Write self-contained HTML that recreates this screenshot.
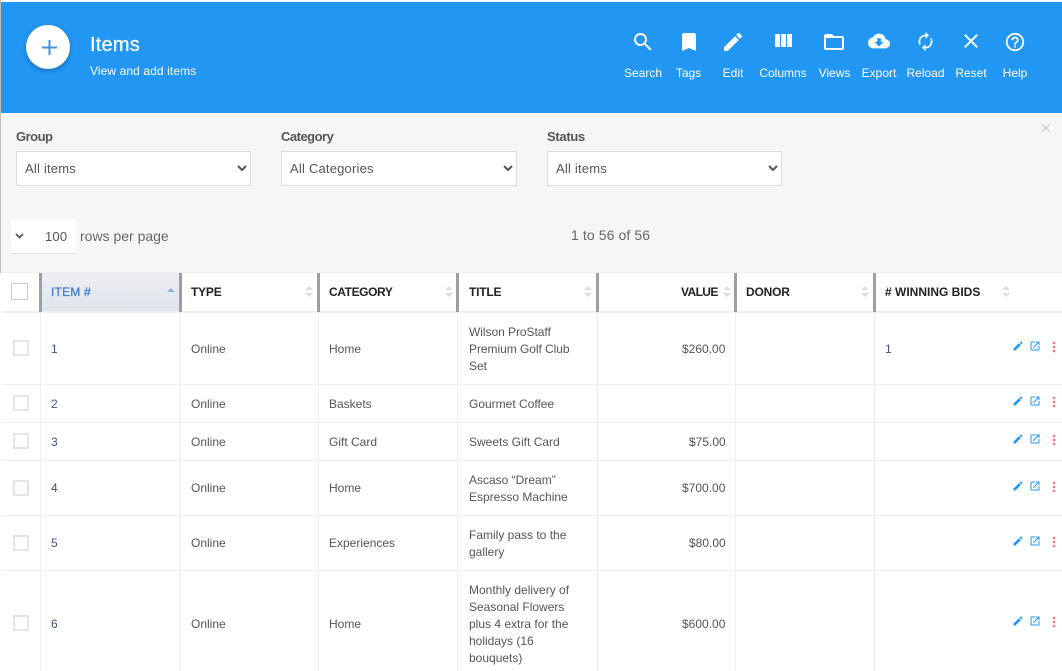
<!DOCTYPE html>
<html lang="en"><head><meta charset="utf-8"><title>Items</title>
<style>
html,body{margin:0;padding:0;background:#fff}
body{width:1062px;height:671px;overflow:hidden;position:relative;font-family:"Liberation Sans",sans-serif;color:#555}
.a,.t,svg.i,.h,.v,.r,.cb,.s{position:absolute}
.t{white-space:nowrap;line-height:16px}
.tb{font-size:12px;color:#fff;width:70px;text-align:center;top:65px}
svg.i{width:24px;height:24px;top:30px;fill:#fff}
.lab{font-size:13px;font-weight:bold;color:#555;top:129px;letter-spacing:-.5px}
select{position:absolute;top:151px;height:35px;background:#fff;border:1px solid #ddd;border-radius:0;font:13px "Liberation Sans",sans-serif;color:#555;padding:0 4px;outline:0;letter-spacing:.2px}
.v{top:273px;width:3px;height:39px;background:#9e9e9e}
.h{top:284px;font-size:12px;font-weight:bold;color:#222;line-height:16px;white-space:nowrap}
.s{top:286px;width:8px;height:11px}
.s:before,.s:after{content:"";position:absolute;left:0;border-left:4px solid transparent;border-right:4px solid transparent}
.s:before{top:0;border-bottom:4px solid #ddd}
.s:after{bottom:0;border-top:4px solid #ddd}
.l{position:absolute;top:313px;width:1px;height:358px;background:#eee}
.r{left:1px;width:1061px;height:1px;background:#eee}
.cb{left:13px;width:12px;height:12px;border:2px solid #e5e5e5;background:#fff}
.c{position:absolute;font-size:12px;line-height:17px;color:#555;white-space:nowrap}
.n{color:#45527f}
.ic{position:absolute;width:12px;height:12px}
.dt{position:absolute;width:16px;height:16px;left:1046px;fill:#f77}
</style></head><body>
<svg width="0" height="0" style="position:absolute"><defs>
<symbol id="pen" viewBox="0 0 24 24"><path d="M3 17.25V21h3.75L17.81 9.94l-3.75-3.75L3 17.25zM20.71 7.04c.39-.39.39-1.02 0-1.41l-2.34-2.34c-.39-.39-1.02-.39-1.41 0l-1.83 1.83 3.75 3.75 1.83-1.83z"/></symbol>
<symbol id="open" viewBox="0 0 24 24"><path d="M19 19H5V5h7V3H5c-1.11 0-2 .9-2 2v14c0 1.1.89 2 2 2h14c1.1 0 2-.9 2-2v-7h-2v7zM14 3v2h3.59l-9.83 9.83 1.41 1.41L19 6.41V10h2V3h-7z"/></symbol>
<symbol id="dots" viewBox="0 0 24 24"><path d="M12 8c1.1 0 2-.9 2-2s-.9-2-2-2-2 .9-2 2 .9 2 2 2zm0 2c-1.1 0-2 .9-2 2s.9 2 2 2 2-.9 2-2-.9-2-2-2zm0 6c-1.1 0-2 .9-2 2s.9 2 2 2 2-.9 2-2-.9-2-2-2z"/></symbol>
</defs></svg>

<div class="a" style="left:0;top:0;width:1px;height:273px;background:#bdbdbd"></div>
<div class="a" style="left:1px;top:2px;width:1061px;height:111px;background:#2196f3"></div>
<div class="a" style="left:1px;top:113px;width:1061px;height:159px;background:#f6f6f6"></div>

<div class="a" style="left:26px;top:25px;width:44px;height:44px;border-radius:50%;background:#fff;box-shadow:0 2px 5px rgba(0,0,0,.25)"></div>
<svg class="a" style="left:42px;top:40px" width="15" height="15" viewBox="0 0 15 15"><path d="M7.5 0v15M0 7.5h15" stroke="#4a90e2" stroke-width="2" fill="none"/></svg>
<div class="t" style="left:90px;top:34px;font-size:20px;line-height:23px;color:#fff;-webkit-text-stroke:.25px #fff;letter-spacing:.2px">Items</div>
<div class="t" style="left:90px;top:63px;font-size:12px;color:#fff;letter-spacing:.1px">View and add items</div>

<svg class="i" style="left:631px" viewBox="0 0 24 24"><path d="M15.5 14h-.79l-.28-.27C15.41 12.59 16 11.11 16 9.5 16 5.91 13.09 3 9.5 3S3 5.91 3 9.5 5.91 16 9.5 16c1.61 0 3.09-.59 4.23-1.57l.27.28v.79l5 4.99L20.49 19l-4.99-5zm-6 0C7.01 14 5 11.99 5 9.5S7.01 5 9.5 5 14 7.01 14 9.5 11.99 14 9.5 14z"/></svg>
<svg class="i" style="left:676.5px" viewBox="0 0 24 24"><path d="M17 3H7c-1.1 0-1.99.9-1.99 2L5 21l7-3 7 3V5c0-1.1-.9-2-2-2z"/></svg>
<svg class="i" style="left:721px" viewBox="0 0 24 24"><path d="M3 17.25V21h3.75L17.81 9.94l-3.75-3.75L3 17.25zM20.71 7.04c.39-.39.39-1.02 0-1.41l-2.34-2.34c-.39-.39-1.02-.39-1.41 0l-1.83 1.83 3.75 3.75 1.83-1.83z"/></svg>
<svg class="i" style="left:771px;top:29px" viewBox="0 0 24 24"><path d="M10 18h5V5h-5v13zm-6 0h5V5H4v13zM16 5v13h5V5h-5z"/></svg>
<svg class="i" style="left:822px" viewBox="0 0 24 24"><path d="M20 6h-8l-2-2H4c-1.1 0-1.99.9-1.99 2L2 18c0 1.1.9 2 2 2h16c1.1 0 2-.9 2-2V8c0-1.1-.9-2-2-2zm0 12H4V8h16v10z"/></svg>
<svg class="i" style="left:868px;width:22px;height:22px;top:30px" viewBox="0 0 24 24"><path d="M19.35 10.04C18.67 6.59 15.64 4 12 4 9.11 4 6.6 5.64 5.35 8.04 2.34 8.36 0 10.91 0 14c0 3.31 2.69 6 6 6h13c2.76 0 5-2.24 5-5 0-2.64-2.05-4.78-4.65-4.96zM17 13l-5 5-5-5h3V9h4v4h3z"/></svg>
<svg class="i" style="left:915px;width:21px;height:21px;top:31px" viewBox="0 0 24 24"><path d="M12 6v3l4-4-4-4v3c-4.42 0-8 3.58-8 8 0 1.57.46 3.03 1.24 4.26L6.7 14.8c-.45-.83-.7-1.79-.7-2.8 0-3.31 2.69-6 6-6zm6.76 1.74L17.3 9.2c.44.84.7 1.79.7 2.8 0 3.31-2.69 6-6 6v-3l-4 4 4 4v-3c4.42 0 8-3.58 8-8 0-1.57-.46-3.03-1.24-4.26z"/></svg>
<svg class="i" style="left:959px;top:29px" viewBox="0 0 24 24"><path d="M19 6.41L17.59 5 12 10.59 6.41 5 5 6.41 10.59 12 5 17.59 6.41 19 12 13.41 17.59 19 19 17.59 13.41 12z"/></svg>
<svg class="i" style="left:1004px;width:22px;height:22px;top:31px" viewBox="0 0 24 24"><path d="M11 18h2v-2h-2v2zm1-16C6.48 2 2 6.48 2 12s4.48 10 10 10 10-4.48 10-10S17.52 2 12 2zm0 18c-4.41 0-8-3.59-8-8s3.59-8 8-8 8 3.59 8 8-3.59 8-8 8zm0-14c-2.21 0-4 1.79-4 4h2c0-1.1.9-2 2-2s2 .9 2 2c0 2-3 1.75-3 5h2c0-2.25 3-2.5 3-5 0-2.21-1.79-4-4-4z"/></svg>

<div class="t tb" style="left:608px">Search</div>
<div class="t tb" style="left:653.5px">Tags</div>
<div class="t tb" style="left:698px">Edit</div>
<div class="t tb" style="left:748px">Columns</div>
<div class="t tb" style="left:799.5px">Views</div>
<div class="t tb" style="left:844px">Export</div>
<div class="t tb" style="left:890.5px">Reload</div>
<div class="t tb" style="left:936px">Reset</div>
<div class="t tb" style="left:980px">Help</div>

<div class="t lab" style="left:16px">Group</div>
<div class="t lab" style="left:281px">Category</div>
<div class="t lab" style="left:547px;letter-spacing:-.3px">Status</div>
<select style="left:16px;width:235px"><option>All items</option></select>
<select style="left:281px;width:236px"><option>All Categories</option></select>
<select style="left:547px;width:235px"><option>All items</option></select>
<svg class="a" style="left:1042px;top:124px" width="8" height="8" viewBox="0 0 8 8"><path d="M.3.3l7.4 7.4M7.7.3L.3 7.7" stroke="#c8c8c8" stroke-width="1" fill="none"/></svg>

<div class="a" style="left:11px;top:219px;width:65px;height:34px;background:#fff;border-bottom:1px solid #ddd"></div>
<svg class="a" style="left:15px;top:233px" width="9" height="6" viewBox="0 0 9 6"><path d="M1 1l3.5 3.5L8 1" stroke="#555" stroke-width="1.8" fill="none"/></svg>
<div class="t" style="left:45px;top:229px;font-size:13px;letter-spacing:.2px">100</div>
<div class="t" style="left:80px;top:228px;font-size:14px;color:#666">rows per page</div>
<div class="t" style="left:571px;top:227px;font-size:14px;color:#666;letter-spacing:.1px">1 to 56 of 56</div>

<div class="a" style="left:1px;top:272px;width:1061px;height:1px;background:#eee"></div>
<div class="a" style="left:41px;top:273px;width:139px;height:38px;background:linear-gradient(#eceef3,#e1e4ec)"></div>
<div class="a" style="left:1px;top:311px;width:1061px;height:2px;background:#eee"></div>
<div class="a" style="left:11px;top:283px;width:15px;height:15px;border:1px solid #ccc;background:#fff"></div>
<div class="v" style="left:39px"></div><div class="v" style="left:179px"></div><div class="v" style="left:317px"></div><div class="v" style="left:456px"></div><div class="v" style="left:596px"></div><div class="v" style="left:734px"></div><div class="v" style="left:873px"></div>

<div class="h" style="left:51px;color:#3f7fd8;font-weight:normal;-webkit-text-stroke:.3px #3f7fd8;letter-spacing:.2px">ITEM #</div>
<div class="h" style="left:191px;letter-spacing:-.2px">TYPE</div>
<div class="h" style="left:329px;letter-spacing:-.4px">CATEGORY</div>
<div class="h" style="left:469px;letter-spacing:-.2px">TITLE</div>
<div class="h" style="left:681px;letter-spacing:-.6px">VALUE</div>
<div class="h" style="left:746px;letter-spacing:-.2px">DONOR</div>
<div class="h" style="left:885px"># WINNING BIDS</div>
<div class="a" style="left:167px;top:288px;border-left:4px solid transparent;border-right:4px solid transparent;border-bottom:4px solid #8fb4e6"></div>
<div class="s" style="left:305px"></div><div class="s" style="left:445px"></div><div class="s" style="left:584px"></div><div class="s" style="left:723px"></div><div class="s" style="left:861px"></div><div class="s" style="left:1002px"></div>

<div class="l" style="left:40px"></div><div class="l" style="left:180px"></div><div class="l" style="left:318px"></div><div class="l" style="left:457px"></div><div class="l" style="left:597px"></div><div class="l" style="left:735px"></div><div class="l" style="left:874px"></div>
<div class="r" style="top:384px"></div><div class="r" style="top:422px"></div><div class="r" style="top:460px"></div><div class="r" style="top:515px"></div><div class="r" style="top:570px"></div>

<div class="cb" style="top:340px"></div>
<div class="c n" style="left:51px;top:341px">1</div>
<div class="c" style="left:191px;top:341px">Online</div>
<div class="c" style="left:329px;top:341px">Home</div>
<div class="c" style="left:469px;top:324px;letter-spacing:-.05px">Wilson ProStaff<br>Premium Golf Club<br>Set</div>
<div class="c" style="left:682px;top:341px">$260.00</div>
<div class="c n" style="left:885px;top:341px">1</div>

<div class="cb" style="top:395px"></div>
<div class="c n" style="left:51px;top:396px">2</div>
<div class="c" style="left:191px;top:396px">Online</div>
<div class="c" style="left:329px;top:396px">Baskets</div>
<div class="c" style="left:469px;top:396px">Gourmet Coffee</div>

<div class="cb" style="top:433px"></div>
<div class="c n" style="left:51px;top:434px">3</div>
<div class="c" style="left:191px;top:434px">Online</div>
<div class="c" style="left:329px;top:434px">Gift Card</div>
<div class="c" style="left:469px;top:434px">Sweets Gift Card</div>
<div class="c" style="left:689px;top:434px">$75.00</div>

<div class="cb" style="top:480px"></div>
<div class="c n" style="left:51px;top:480px">4</div>
<div class="c" style="left:191px;top:480px">Online</div>
<div class="c" style="left:329px;top:480px">Home</div>
<div class="c" style="left:469px;top:472px">Ascaso “Dream”<br>Espresso Machine</div>
<div class="c" style="left:682px;top:480px">$700.00</div>

<div class="cb" style="top:535px"></div>
<div class="c n" style="left:51px;top:535px">5</div>
<div class="c" style="left:191px;top:535px">Online</div>
<div class="c" style="left:329px;top:535px">Experiences</div>
<div class="c" style="left:469px;top:527px">Family pass to the<br>gallery</div>
<div class="c" style="left:689px;top:535px">$80.00</div>

<div class="cb" style="top:615px"></div>
<div class="c n" style="left:51px;top:616px">6</div>
<div class="c" style="left:191px;top:616px">Online</div>
<div class="c" style="left:329px;top:616px">Home</div>
<div class="c" style="left:469px;top:582px">Monthly delivery of<br>Seasonal Flowers<br>plus 4 extra for the<br>holidays (16<br>bouquets)</div>
<div class="c" style="left:682px;top:616px">$600.00</div>

<svg class="ic" style="left:1012px;top:340px;fill:#2196f3"><use href="#pen"/></svg><svg class="ic" style="left:1029px;top:340px;fill:#2196f3"><use href="#open"/></svg><svg class="dt" style="top:339px"><use href="#dots"/></svg>
<svg class="ic" style="left:1012px;top:395px;fill:#2196f3"><use href="#pen"/></svg><svg class="ic" style="left:1029px;top:395px;fill:#2196f3"><use href="#open"/></svg><svg class="dt" style="top:394px"><use href="#dots"/></svg>
<svg class="ic" style="left:1012px;top:433px;fill:#2196f3"><use href="#pen"/></svg><svg class="ic" style="left:1029px;top:433px;fill:#2196f3"><use href="#open"/></svg><svg class="dt" style="top:432px"><use href="#dots"/></svg>
<svg class="ic" style="left:1012px;top:480px;fill:#2196f3"><use href="#pen"/></svg><svg class="ic" style="left:1029px;top:480px;fill:#2196f3"><use href="#open"/></svg><svg class="dt" style="top:479px"><use href="#dots"/></svg>
<svg class="ic" style="left:1012px;top:535px;fill:#2196f3"><use href="#pen"/></svg><svg class="ic" style="left:1029px;top:535px;fill:#2196f3"><use href="#open"/></svg><svg class="dt" style="top:534px"><use href="#dots"/></svg>
<svg class="ic" style="left:1012px;top:615px;fill:#2196f3"><use href="#pen"/></svg><svg class="ic" style="left:1029px;top:615px;fill:#2196f3"><use href="#open"/></svg><svg class="dt" style="top:614px"><use href="#dots"/></svg>
</body></html>
